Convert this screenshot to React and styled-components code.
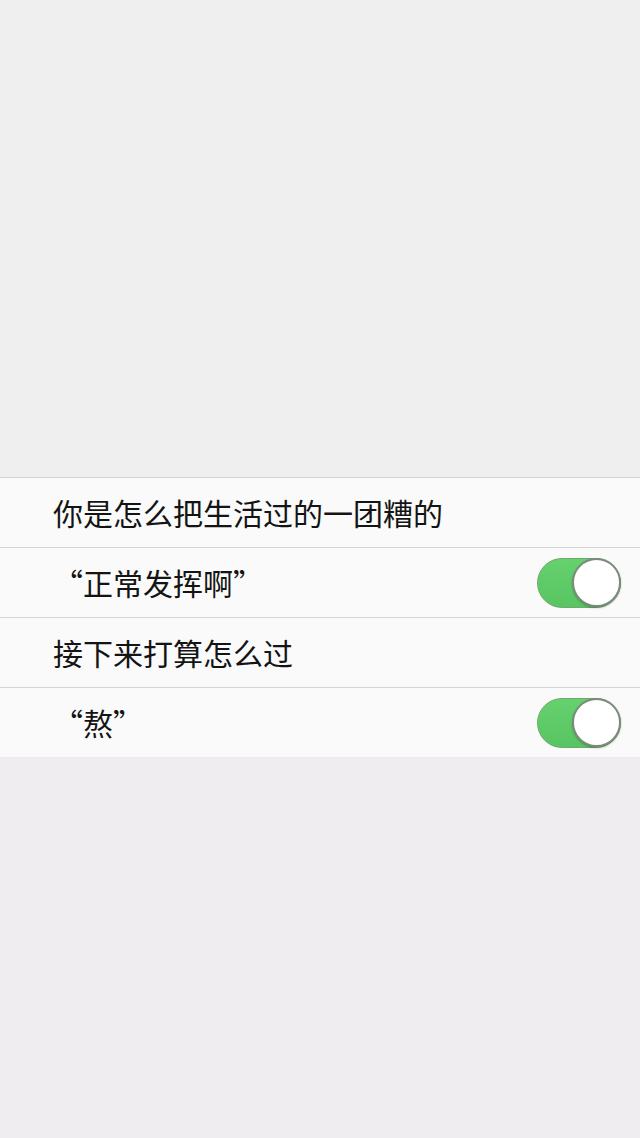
import React from 'react'
import styled, { createGlobalStyle } from 'styled-components'

const rows = [
  { text: '你是怎么把生活过的一团糟的' },
  { text: '“正常发挥啊”', toggle: true },
  { text: '接下来打算怎么过' },
  { text: '“熬”', toggle: true },
]

export default () => {
  return (
    <Page>
      <GlobalStyle />
      <TopSpace />
      <List>
        {rows.map((row, i) => (
          <Row key={i} last={i === rows.length - 1}>
            <Label>{row.text}</Label>
            {row.toggle && (
              <Switch>
                <Knob />
              </Switch>
            )}
          </Row>
        ))}
      </List>
      <BottomSpace />
    </Page>
  )
}

const GlobalStyle = createGlobalStyle`
html, body {
  margin:0;
  padding:0;
  background:#efefef;
}
`

const Page = styled.div`
display:flex;
flex-direction:column;
width:640px;
height:1138px;
font-family:"Noto Sans CJK SC", "Noto Sans", sans-serif;
`

const TopSpace = styled.div`
flex:0 0 477px;
background:#efefef;
`

const List = styled.div`
display:flex;
flex-direction:column;
border-top:1px solid #d4d4d4;
background:#fafafa;
`

const Row = styled.div`
display:flex;
align-items:center;
justify-content:space-between;
height:${p => (p.last ? '69px' : '69px')};
padding:0 19px 0 53px;
border-bottom:1px solid ${p => (p.last ? '#ebebeb' : '#d4d4d4')};
`

const Label = styled.span`
font-size:30px;
color:#141414;
letter-spacing:0;
line-height:1;
margin-top:-2px;
`

const Switch = styled.div`
position:relative;
width:84px;
height:50px;
box-sizing:border-box;
border-radius:25px;
background:linear-gradient(#66d26e, #58c462);
border:1.5px solid #6fa872;
`

const Knob = styled.div`
position:absolute;
right:-1px;
top:-1px;
width:49px;
height:49px;
box-sizing:border-box;
border-radius:50%;
background:#fff;
border:2px solid #7b8c7c;
box-shadow:0 1px 2px rgba(0,0,0,0.25);
`

const BottomSpace = styled.div`
flex:1;
background:#efedef;
`
